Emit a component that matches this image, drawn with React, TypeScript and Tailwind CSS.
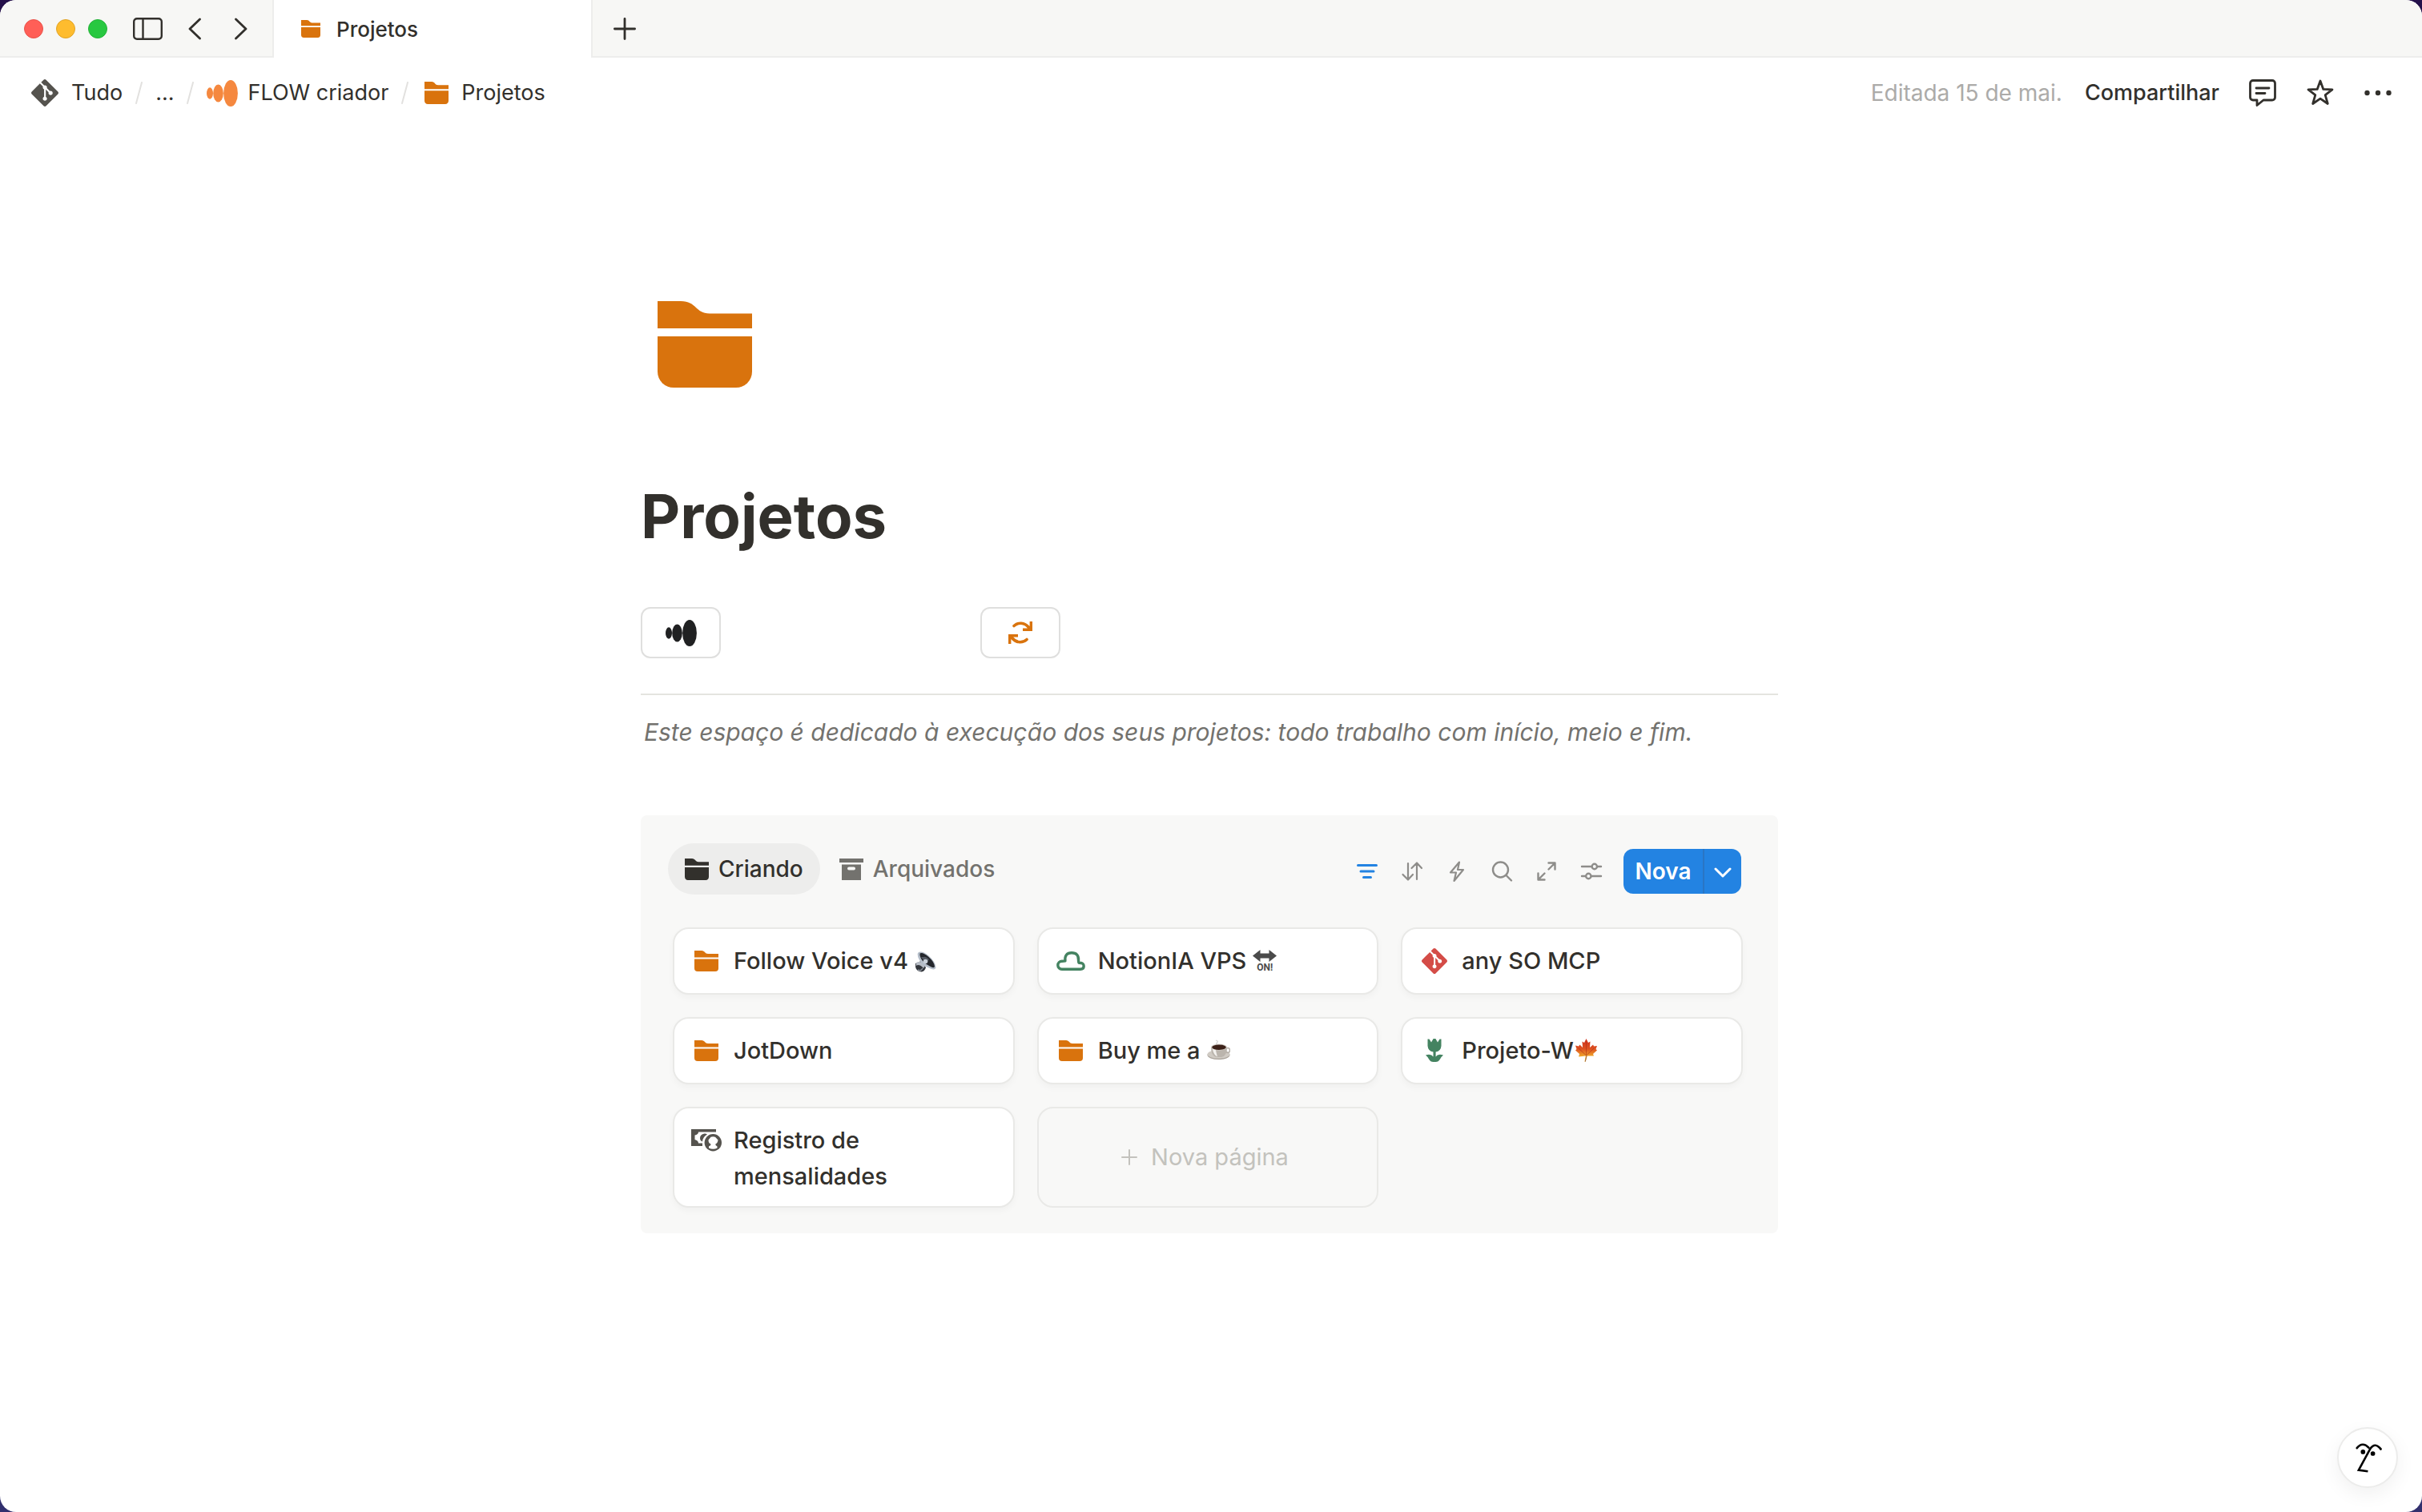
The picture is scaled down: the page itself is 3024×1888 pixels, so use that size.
import type { ReactNode } from "react";
import { SiGit } from "react-icons/si";

type IconProps = { className?: string };

function FolderIcon({ className }: IconProps) {
  return (
    <svg viewBox="0 0 118 108" preserveAspectRatio="none" fill="currentColor" className={className} aria-hidden="true">
      <path d="M0 0H29C49 0 47 15.500 65 15.500H118V34H0Z" />
      <path d="M0 44H118V88A20 20 0 0 1 98 108H20A20 20 0 0 1 0 88Z" />
    </svg>
  );
}

function SmallFolderIcon({ className }: IconProps) {
  return (
    <svg viewBox="0 0 30 26" preserveAspectRatio="none" fill="currentColor" className={className} aria-hidden="true">
      <path d="M0 0H9C13 0 13 4 17 4H30V8.500H0Z" />
      <path d="M0 10.500H30V22A4 4 0 0 1 26 26H4A4 4 0 0 1 0 22Z" />
    </svg>
  );
}

function WaveIcon({ className }: IconProps) {
  return (
    <svg viewBox="0 0 39 33" fill="currentColor" className={className} aria-hidden="true">
      <ellipse cx="4" cy="16.500" rx="4" ry="7.200" />
      <ellipse cx="14.500" cy="16.500" rx="6.300" ry="11" />
      <ellipse cx="30" cy="16.500" rx="8.900" ry="16.500" />
    </svg>
  );
}

function RefreshIcon({ className }: IconProps) {
  return (
    <svg viewBox="0 0 30 28" className={className} aria-hidden="true">
      {["", "rotate(180 15 14)"].map((t) => (
        <g key={t} transform={t}>
          <path d="M7 5.500C12 .8 20 .8 25.500 7.500" fill="none" stroke="currentColor" strokeWidth="3.600" strokeLinecap="round" />
          <path d="M30 0V12H18V8.500H23.500L26.600 5.500V0Z" fill="currentColor" />
        </g>
      ))}
    </svg>
  );
}

function ArchiveIcon({ className }: IconProps) {
  return (
    <svg viewBox="0 0 30 27" fill="currentColor" className={className} aria-hidden="true">
      <rect width="30" height="5" />
      <path fillRule="evenodd" d="M3 7.500H27V27H3ZM12 10.500a2 2 0 0 0 0 4H18a2 2 0 0 0 0-4Z" />
    </svg>
  );
}

function CloudIcon({ className }: IconProps) {
  return (
    <svg viewBox="0 0 36 24" fill="none" stroke="currentColor" strokeWidth="3.400" strokeLinejoin="round" className={className} aria-hidden="true">
      <path d="M6.800 22.200A5 5 0 0 1 6.800 12.200Q9.500 12.200 10.900 11.800Q10 1.800 19 1.800Q28 1.800 27.500 10.800Q27.500 12.800 28 14.200Q34.200 14 34.200 18.200Q34.200 22.200 30 22.200Z" />
    </svg>
  );
}

function TulipIcon({ className }: IconProps) {
  return (
    <svg viewBox="0 0 22 29" fill="currentColor" className={className} aria-hidden="true">
      <path d="M2.500 .5L4.500 .5L7 4.500L9.600 0H12.400L15 4.500L17.500 .5H19.500V9Q19 15.500 12.600 16.500V22.500Q15 18.500 22 20.500Q19.500 22.500 18 25.500Q16 29 12.500 29H9.500Q6 29 4 25.500Q2.500 22.500 0 20.500Q7 18.500 9.500 22.500V16.500Q3 15.500 2.500 9Z" />
    </svg>
  );
}

function MoneyIcon({ className }: IconProps) {
  return (
    <svg viewBox="0 0 38 28" className={className} aria-hidden="true">
      <path d="M0 0H31V3.500H9Q9 6.500 4.500 7.500V13Q9 14 9 17.500H14V21H0Z" fill="currentColor" />
      <path d="M16.500 5.500Q11 6.500 11 11Q11 14.500 14 15.500Q14.500 9.500 20 6.500Q18.500 5.300 16.500 5.500Z" fill="currentColor" />
      <circle cx="27.300" cy="16.800" r="10.700" fill="currentColor" />
      <path d="M24.500 9.800Q27.300 8.600 30 9.800L33.500 13.500Q33 17.500 30.500 18.200V20L32.500 21.500V23.500Q27.300 26 22 23.500V21.500L24.300 20V18.200Q21.500 17.500 21.500 13.500Z" fill="#fff" />
    </svg>
  );
}

function SpeakerEmoji() {
  return (
    <svg role="img" aria-label="🔈" viewBox="0 0 27 26" className="ml-2 inline-block h-[26px] w-[27px] align-[-4px]">
      <path d="M1 15Q0 23 6 25Q12 27 14 20L8 12Z" fill="#33363c" />
      <path d="M2 14Q8 11 13 18L11 21Q6 15 1.500 18Z" fill="#b7bdc6" />
      <path d="M4 23Q8 25 10 21" stroke="#8d949e" strokeWidth="1.500" fill="none" />
      <path d="M4 2Q8 -2 17 5Q26 13 26.500 20Q26 24 20 21.500Q9 18 5.500 10Q3 5 4 2Z" fill="#b4bdc9" />
      <path d="M6.500 2.500Q10 .5 17 6.500Q24.500 13 25 19Q24 21.500 19 18.500Q10 14 7.500 8Q6 4.500 6.500 2.500Z" fill="#25282d" />
      <path d="M8 7Q11 12 15 14L18 10Q14 6 11 7Z" fill="#555b65" />
      <circle cx="13.500" cy="12.500" r="2.800" fill="#c9d0d9" />
    </svg>
  );
}

function OnEmoji() {
  return (
    <span role="img" aria-label="🔛" className="ml-2 inline-block w-[30px] align-[-2px] text-[#4b4b4b]">
      <svg viewBox="0 0 30 15" fill="currentColor" className="block h-[15px] w-[30px]" aria-hidden="true">
        <path d="M0 7.500L9.500 0V4.500H20.500V0L30 7.500L20.500 15V10.500H9.500V15Z" />
      </svg>
      <span className="block text-center font-[Roboto] text-xs leading-[14px] font-bold">ON!</span>
    </span>
  );
}

function CoffeeEmoji() {
  return (
    <svg role="img" aria-label="☕" viewBox="0 0 29 26" className="ml-2 inline-block h-[26px] w-[29px] align-[-2px]">
      <path d="M11 1Q15 2 12.500 4T15 6.500" stroke="#d5d5d5" strokeWidth="1.200" fill="none" />
      <ellipse cx="14.500" cy="19.500" rx="14" ry="5.500" fill="#a8a198" />
      <ellipse cx="14.500" cy="18.500" rx="14" ry="5.200" fill="#d0cbc4" />
      <ellipse cx="26" cy="13.500" rx="2.500" ry="3" fill="none" stroke="#b5afa7" strokeWidth="1.500" />
      <path d="M5 9.500Q5 21 12 22H18Q25 21 25 9.500Z" fill="#bbb5ad" />
      <path d="M7 12Q8 19 13 21.500Q11 15 11 12Z" fill="#f3f1ee" />
      <ellipse cx="15" cy="9.500" rx="10" ry="4" fill="#d5d0ca" />
      <ellipse cx="15" cy="9.700" rx="8.800" ry="3.200" fill="#3c2118" />
    </svg>
  );
}

function MapleEmoji() {
  return (
    <svg role="img" aria-label="🍁" viewBox="0 0 27 29" className="ml-[2px] inline-block h-[29px] w-[27px] align-[-4px]">
      <defs>
        <linearGradient id="maple" x1="0" y1="0" x2="0" y2="1">
          <stop offset="0.1" stopColor="#d2361f" />
          <stop offset="0.45" stopColor="#dd5220" />
          <stop offset="0.75" stopColor="#f0a52a" />
        </linearGradient>
      </defs>
      <path d="M13.500 0L16 5L18.500 3.500L18 11L22 7.500L23 9.500L27 9L25.500 13L27 14.500L22 19L23 21.500L14.500 21.500L12.500 29L11.500 28.500L12.800 21.500L4 22.500L5 19L0 14.500L1.500 13L0 8.500L4 9.500L5.500 7.500L9 11L8.500 3.500L11 5Z" fill="url(#maple)" />
      <path d="M13.500 4V21M13.500 21L4 12M13.500 21L23 12" stroke="#a82a18" strokeWidth=".8" fill="none" opacity=".7" />
      <path d="M14 21.500L12.300 28.500" stroke="#9c6a45" strokeWidth="1" />
    </svg>
  );
}

function FaceIcon() {
  return (
    <svg viewBox="0 0 76 76" fill="none" stroke="#000" strokeWidth="2.800" className="size-full" aria-hidden="true">
      <path d="M24 25.500Q31.500 16.500 39.500 25" strokeLinecap="round" />
      <path d="M55.500 27Q48 17 41.500 26.500L26.300 54.500L38.500 56.200" />
      <path d="M55.500 27L55 26.400" strokeLinecap="round" />
      <circle cx="32" cy="30.500" r="3" fill="#000" stroke="none" />
      <circle cx="45" cy="32.700" r="3" fill="#000" stroke="none" />
    </svg>
  );
}

function Line({ box, d, className, width = 2.4 }: { box: string; d: string; className: string; width?: number }) {
  return (
    <svg viewBox={box} fill="none" stroke="currentColor" strokeWidth={width} strokeLinecap="round" strokeLinejoin="round" className={className} aria-hidden="true">
      <path d={d} />
    </svg>
  );
}

function Slash() {
  return (
    <svg viewBox="0 0 9 28" className="h-7 w-[9px] text-[#e2e1df]" stroke="currentColor" strokeWidth="2" strokeLinecap="round" aria-hidden="true">
      <path d="M8 1L1 27" />
    </svg>
  );
}

function TitleBar() {
  return (
    <header className="flex h-[72px] items-stretch text-[#32302c]">
      <div className="flex w-[342px] items-center border-r-2 border-b-2 border-[#ededec] bg-[#f7f7f5] pt-[2px] pl-[30px]">
        <div className="flex gap-4">
          <button aria-label="Fechar" className="size-6 rounded-full border border-[#e9524a] bg-[#ff5f57]" />
          <button aria-label="Minimizar" className="size-6 rounded-full border border-[#e1a325] bg-[#febc2e]" />
          <button aria-label="Maximizar" className="size-6 rounded-full border border-[#24b238] bg-[#28c840]" />
        </div>
        <button aria-label="Barra lateral" className="ml-8">
          <Line box="0 0 37 28" d="M5 1.200H32A3.800 3.800 0 0 1 35.800 5V23A3.800 3.800 0 0 1 32 26.800H5A3.800 3.800 0 0 1 1.200 23V5A3.800 3.800 0 0 1 5 1.200ZM12.500 1.500V26.500" className="h-7 w-[37px]" />
        </button>
        <button aria-label="Voltar" className="ml-8">
          <Line box="0 0 16 28" d="M14.500 2L2 14L14.500 26" className="h-7 w-4" width={2.800} />
        </button>
        <button aria-label="Avançar" className="ml-[42px]">
          <Line box="0 0 16 28" d="M1.500 2L14 14L1.500 26" className="h-7 w-4" width={2.800} />
        </button>
      </div>
      <button className="flex w-[396px] items-center gap-5 pl-[34px] text-[26px] font-medium">
        <SmallFolderIcon className="h-[22px] w-6 text-[#d9730d]" />
        Projetos
      </button>
      <div className="flex flex-1 items-center border-b-2 border-l-2 border-[#ededec] bg-[#f7f7f5] pt-[2px] pl-[26px]">
        <button aria-label="Nova aba">
          <Line box="0 0 28 28" d="M14 1.400V26.600M1.400 14H26.600" className="size-7" width={2.800} />
        </button>
      </div>
    </header>
  );
}

function TopBar() {
  return (
    <div className="flex h-[88px] items-center justify-between pr-[38px] pl-[39px] text-[27px] text-[#32302c]">
      <nav aria-label="Trilha" className="flex items-center">
        <a href="#tudo" className="flex items-center gap-4">
          <SiGit className="size-[34px] text-[#55534e]" />
          Tudo
        </a>
        <span className="mx-4"><Slash /></span>
        <a href="#mais">...</a>
        <span className="mx-4"><Slash /></span>
        <a href="#flow" className="flex items-center gap-3">
          <WaveIcon className="h-[33px] w-[39px] text-[#f5883f]" />
          FLOW criador
        </a>
        <span className="mx-4"><Slash /></span>
        <a href="#projetos" className="ml-1 flex items-center gap-4">
          <SmallFolderIcon className="h-7 w-[30px] text-[#d9730d]" />
          Projetos
        </a>
      </nav>
      <div className="flex items-center">
        <span className="text-[28px] text-[#acaba9]">Editada 15 de mai.</span>
        <button className="ml-7 font-medium">Compartilhar</button>
        <button aria-label="Comentários" className="ml-[37px]">
          <Line box="0 0 34 34" d="M5 1.500H29A3.500 3.500 0 0 1 32.500 5V22.500A3.500 3.500 0 0 1 29 26H18L10 32.500V26H5A3.500 3.500 0 0 1 1.500 22.500V5A3.500 3.500 0 0 1 5 1.500ZM9 11H25M9 17.500H20" className="size-[34px]" width={2.800} />
        </button>
        <button aria-label="Favorito" className="ml-[38px]">
          <Line box="0 0 34 34" d="M17 2L20.800 12.400L32 12.800L23.200 19.600L26.300 30.500L17 24.200L7.700 30.500L10.800 19.600L2 12.800L13.200 12.400Z" className="size-[34px]" width={2.800} />
        </button>
        <button aria-label="Mais ações" className="ml-[38px]">
          <svg viewBox="0 0 34 8" fill="currentColor" className="h-2 w-[34px]" aria-hidden="true">
            <circle cx="3.500" cy="4" r="3.200" />
            <circle cx="17" cy="4" r="3.200" />
            <circle cx="30.500" cy="4" r="3.200" />
          </svg>
        </button>
      </div>
    </div>
  );
}

const tools = [
  { label: "Filtrar", box: "0 0 28 28", d: "M2.500 6.500H25.500M6 14H22M9.500 21.500H18.500", width: 3, cls: "size-7 text-[#2383e2]" },
  { label: "Ordenar", box: "0 0 28 28", d: "M9 4V24M2.500 18L9 24.500L15 18M20 24V4M13.500 10L20 3.500L26 10", width: 2.2, cls: "size-7 text-[#8e8d8a]" },
  { label: "Automações", box: "0 0 28 28", d: "M17 2.500L6 15.500H13L10.500 26L22 12H15L17 2.500Z", width: 2.2, cls: "size-7 text-[#8e8d8a]" },
  { label: "Buscar", box: "0 0 28 28", d: "M22 12A9.500 9.500 0 1 1 3 12A9.500 9.500 0 1 1 22 12ZM19.500 19L26 25.500", width: 2.4, cls: "size-7 text-[#8e8d8a]" },
  { label: "Expandir", box: "0 0 28 28", d: "M16.500 11.500L24.500 3.500M16.500 3.500H24.500V11.500M11.500 16.500L3.500 24.500M3.500 16.500V24.500H11.500", width: 2.4, cls: "size-7 text-[#8e8d8a]" },
  { label: "Configurações", box: "0 0 28 28", d: "M2 8H14.500M21 8H26M21 8A3.200 3.200 0 1 1 14.600 8A3.200 3.200 0 1 1 21 8ZM2 20H7M13.500 20H26M13.500 20A3.200 3.200 0 1 1 7.100 20A3.200 3.200 0 1 1 13.500 20Z", width: 2.4, cls: "size-7 text-[#8e8d8a]" },
];

const folder = <SmallFolderIcon className="h-[26px] w-[30px] text-[#d9730d]" />;

const cards: { title: string; icon: ReactNode; emoji?: ReactNode }[] = [
  { title: "Follow Voice v4", icon: folder, emoji: <SpeakerEmoji /> },
  { title: "NotionIA VPS", icon: <CloudIcon className="h-6 w-9 text-[#448361]" />, emoji: <OnEmoji /> },
  { title: "any SO MCP", icon: <SiGit className="size-8 text-[#d44c47]" /> },
  { title: "JotDown", icon: folder },
  { title: "Buy me a", icon: folder, emoji: <CoffeeEmoji /> },
  { title: "Projeto-W", icon: <TulipIcon className="h-[29px] w-[22px] text-[#448361]" />, emoji: <MapleEmoji /> },
  { title: "Registro de mensalidades", icon: <MoneyIcon className="h-7 w-[38px] text-[#55534e]" /> },
];

function Board() {
  return (
    <section className="mt-20 rounded-lg bg-[#f8f8f7] px-[34px] pt-[35px] pb-8">
      <div className="flex items-start justify-between">
        <div role="tablist" className="flex items-center text-[28px] font-medium">
          <button role="tab" aria-selected="true" className="flex h-16 items-center gap-3 rounded-full bg-[#ededec] px-[21px] text-[#32302c]">
            <SmallFolderIcon className="h-[27px] w-[30px]" />
            Criando
          </button>
          <button role="tab" aria-selected="false" className="flex h-16 items-center gap-3 px-6 text-[#73726e]">
            <ArchiveIcon className="h-[27px] w-[30px]" />
            Arquivados
          </button>
        </div>
        <div className="flex items-center pt-[7px] pr-3">
          <div className="flex gap-7">
            {tools.map((t) => (
              <button key={t.label} aria-label={t.label}>
                <Line box={t.box} d={t.d} className={t.cls} width={t.width} />
              </button>
            ))}
          </div>
          <div className="ml-[26px] flex h-14 overflow-hidden rounded-xl bg-[#2383e2] text-white">
            <button className="w-[101px] border-r-2 border-[#2a75c4] text-[28px] font-semibold">Nova</button>
            <button aria-label="Mais opções" className="flex w-[46px] items-center justify-center">
              <Line box="0 0 22 14" d="M2 2L11 11L20 2" className="mt-1 h-[14px] w-[22px]" width={3} />
            </button>
          </div>
        </div>
      </div>
      <div className="mt-[41px] grid grid-cols-3 gap-7 pr-[10px] pl-[6px]">
        {cards.map((c) => (
          <a key={c.title} href="#card" className="flex min-h-[84px] items-start rounded-[20px] border-2 border-[#e9e9e7] bg-white pt-[17px] pr-10 pb-[15px] pl-5 text-[29px] leading-[45px] font-medium text-[#32302c] shadow-[0_4px_8px_rgba(0,0,0,0.03)]">
            <span className="mr-[14px] flex h-[45px] w-10 shrink-0 items-center justify-center">{c.icon}</span>
            <span>
              {c.title}
              {c.emoji}
            </span>
          </a>
        ))}
        <button className="flex items-center justify-center gap-4 rounded-[20px] border-2 border-[#e9e9e7] pr-2 text-[29px] text-[#c3c2bd]">
          <Line box="0 0 22 22" d="M11 2V20M2 11H20" className="size-[22px]" width={2} />
          Nova página
        </button>
      </div>
    </section>
  );
}

export default function App() {
  return (
    <div className="min-h-screen bg-[linear-gradient(#24104a,#32306e)] font-[Inter,sans-serif]">
      <div className="relative min-h-screen overflow-hidden rounded-[20px] bg-white">
        <TitleBar />
        <TopBar />
        <main className="pr-1 pt-[216px]">
          <div className="mx-auto max-w-[1420px]">
            <FolderIcon className="ml-[21px] h-[108px] w-[118px] text-[#d9730d]" />
            <h1 className="mt-[112px] text-[76px] leading-[96px] font-bold text-[#32302c]">Projetos</h1>
            <div className="mt-[66px] flex gap-[324px]">
              <button aria-label="Flow" className="flex h-16 w-[100px] items-center justify-center rounded-xl border-2 border-[#dfdfde] text-[#202122]">
                <WaveIcon className="h-[33px] w-[39px]" />
              </button>
              <button aria-label="Atualizar" className="flex h-16 w-[100px] items-center justify-center rounded-xl border-2 border-[#dfdfde] text-[#d9730d]">
                <RefreshIcon className="h-7 w-[30px]" />
              </button>
            </div>
            <hr className="mt-11 border-t-2 border-[#e4e4e0]" />
            <p className="mt-[22px] pl-1 text-[30px] leading-[48px] text-[#73726e] italic">
              Este espaço é dedicado à execução dos seus projetos: todo trabalho com início, meio e fim.
            </p>
            <Board />
          </div>
        </main>
        <button aria-label="Assistente" className="absolute right-[30px] bottom-[30px] size-[76px] rounded-full border-2 border-[#ececeb] bg-white shadow-[0_8px_24px_rgba(0,0,0,0.06)]">
          <FaceIcon />
        </button>
      </div>
    </div>
  );
}
